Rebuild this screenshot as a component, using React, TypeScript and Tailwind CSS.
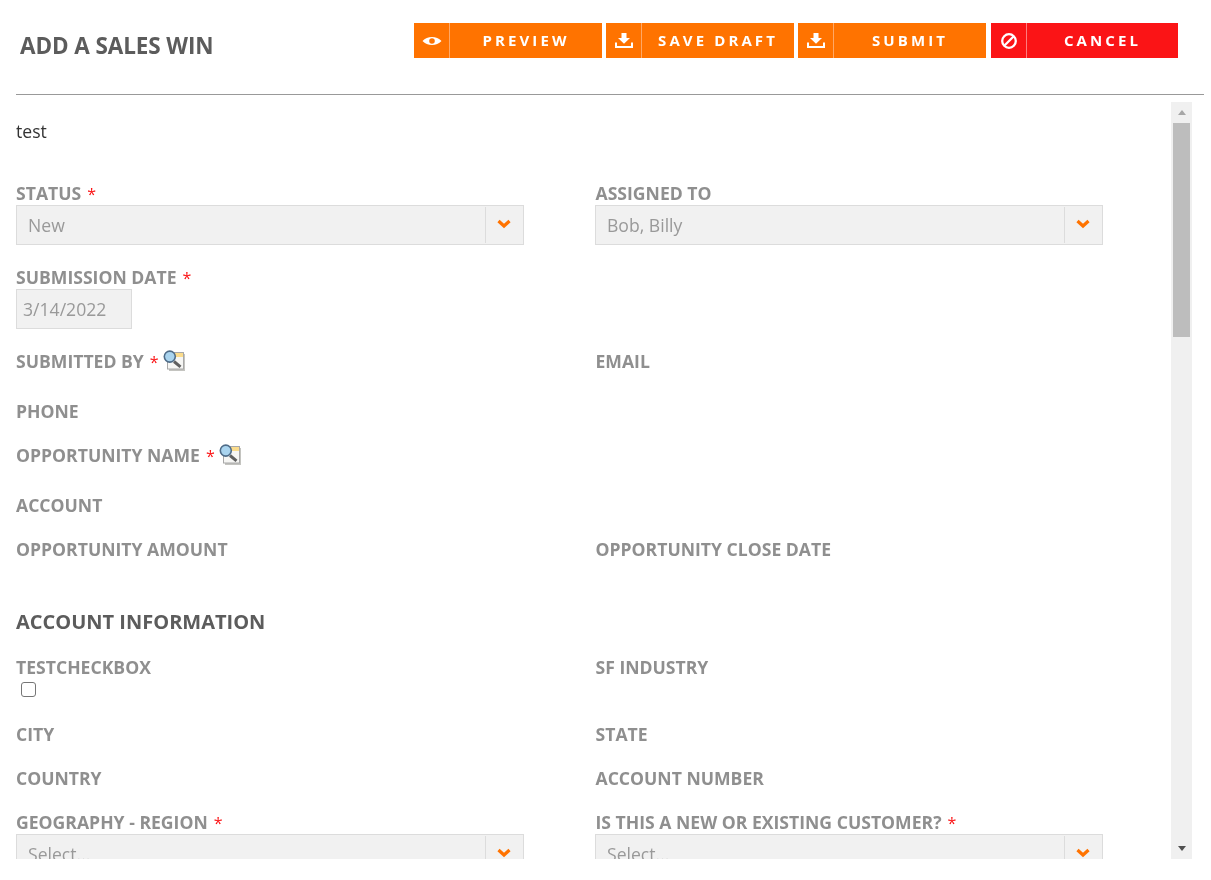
import React from "react";

const font = { fontFamily: '"Open Sans", sans-serif' };

function EyeIcon() {
  return (
    <svg width="20" height="20" viewBox="0 0 20 20">
      <path fillRule="evenodd" fill="#fff" d="M0.5 10C3 7.100 6.300 6 10 6s7 1.100 9.500 4C17 12.900 13.700 14 10 14s-7-1.100-9.500-4zM10 7.200a2.800 2.800 0 1 0 0 5.600 2.800 2.800 0 0 0 0-5.600z" />
    </svg>
  );
}

function DownloadIcon() {
  return (
    <svg width="18" height="15" viewBox="0 0 18 15" fill="#fff" className="-mt-[1px]">
      <path d="M6.500 0h5v5h3.500L9 10.800 3 5h3.500z" />
      <path d="M0 9.500h2v3.500h14V9.500h2V15H0z" />
    </svg>
  );
}

function BanIcon() {
  return (
    <svg width="20" height="20" viewBox="0 0 20 20" fill="none" stroke="#fff" strokeWidth="2.300">
      <circle cx="10" cy="10" r="6.800" />
      <path d="M5.500 14.500 14.500 5.500" />
    </svg>
  );
}

function ActionButton({ icon, label, red }: { icon: React.ReactNode; label: string; red?: boolean }) {
  return (
    <button
      className={
        red
          ? "flex h-[35px] w-[187px] items-center bg-[#fb1416] text-white"
          : "flex h-[35px] w-[188px] items-center bg-[#ff7300] text-white"
      }
    >
      <span className={red ? "flex h-full w-[36px] items-center justify-center border-r border-[#fd7c7e]" : "flex h-full w-[36px] items-center justify-center border-r border-[#ffa866]"}>
        {icon}
      </span>
      <span className="flex-1 text-center text-[15px] font-bold tracking-[3.1px]">{label}</span>
    </button>
  );
}

function Label({ text, required, lookup, right }: { text: string; required?: boolean; lookup?: boolean; right?: boolean }) {
  return (
    <div className={right ? "flex h-6 items-center pl-[0.5px] text-[17.6px] font-bold leading-6 text-[#8f8f8f]" : "flex h-6 items-center text-[17.6px] font-bold leading-6 text-[#8f8f8f]"}>
      <span>{text}</span>
      {required && <span className="ml-[6px] mt-[1px] text-[16px] font-normal text-[#fb1416]">*</span>}
      {lookup && (
        <span className="-mt-[2px] ml-[4px]">
          <LookupIcon />
        </span>
      )}
    </div>
  );
}

function LookupIcon() {
  return (
    <svg width="23" height="21" viewBox="0 0 23 21" className="block">
      <rect x="6" y="4" width="16" height="17" fill="#c4c4c0" />
      <rect x="4.500" y="2.500" width="16" height="16.500" fill="#f6f6f4" stroke="#a8a8a8" strokeWidth="1" />
      <rect x="11" y="3" width="9" height="4" fill="#fbdc8c" />
      <path d="M11 11.500 17.500 16.800" stroke="#5f5f5f" strokeWidth="3" />
      <circle cx="6.800" cy="6.600" r="5.500" fill="#a9d4ef" stroke="#4f6c88" strokeWidth="1.600" />
    </svg>
  );
}

function SelectBox({ value }: { value: string }) {
  return (
    <div className="flex h-10 w-[508px] items-stretch border border-[#dcdcdc] bg-[#f1f1f1]">
      <span className="flex flex-1 items-center px-[11px] text-[17.6px] text-[#999999]">{value}</span>
      <span className="my-[1px] flex w-[38px] justify-center border-l border-[#dcdcdc] pt-[9px] pr-[1px]">
        <svg width="16" height="16" viewBox="0 0 16 16" fill="none" stroke="#ff7300" strokeWidth="3.200">
          <path d="M2.500 5 8 10 13.500 5" />
        </svg>
      </span>
    </div>
  );
}

function Row({ children, className }: { children: React.ReactNode; className: string }) {
  return <div className={"grid grid-cols-[579px_1fr] " + className}>{children}</div>;
}

export default function App() {
  return (
    <div className="h-[880px] w-[1211px] overflow-hidden bg-white" style={font}>
      <header className="flex h-[94px] items-start pl-5 pt-[23px] will-change-transform">
        <h1 className="mt-[5px] w-[394px] text-[22.5px] leading-[36px] font-bold tracking-[-0.1px] text-[#5c5c5c]">ADD A SALES WIN</h1>
        <div className="flex gap-1">
          <ActionButton icon={<EyeIcon />} label="PREVIEW" />
          <ActionButton icon={<DownloadIcon />} label="SAVE DRAFT" />
          <ActionButton icon={<DownloadIcon />} label="SUBMIT" />
          <div className="ml-[1px]">
            <ActionButton icon={<BanIcon />} label="CANCEL" red />
          </div>
        </div>
      </header>
      <hr className="ml-4 w-[1188px] border-t border-[#999999]" />
      <div className="mt-[7px] ml-4 flex h-[757px] w-[1176px]">
        <main className="h-full flex-1 overflow-hidden will-change-transform">
          <p className="mt-[17px] mb-[38px] text-[17.6px] leading-6 text-[#333333]">test</p>
          <Row className="mb-5">
            <div>
              <Label text="STATUS" required />
              <SelectBox value="New" />
            </div>
            <div>
              <Label text="ASSIGNED TO" right />
              <SelectBox value="Bob, Billy" />
            </div>
          </Row>
          <div className="mb-5">
            <Label text="SUBMISSION DATE" required />
            <div className="flex h-10 w-[116px] items-center border border-[#dcdcdc] bg-[#f1f1f1] px-[6px] text-[17.6px] text-[#999999]">
              3/14/2022
            </div>
          </div>
          <Row className="mb-5 h-[30px]">
            <Label text="SUBMITTED BY" required lookup />
            <Label text="EMAIL" right />
          </Row>
          <div className="mb-5">
            <Label text="PHONE" />
          </div>
          <div className="mb-5 h-[30px]">
            <Label text="OPPORTUNITY NAME" required lookup />
          </div>
          <div className="mb-5">
            <Label text="ACCOUNT" />
          </div>
          <Row className="mb-[45px]">
            <Label text="OPPORTUNITY AMOUNT" />
            <Label text="OPPORTUNITY CLOSE DATE" right />
          </Row>
          <h2 className="mb-[19px] flex h-[30px] items-center pt-[1px] text-[20px] font-bold text-[#5c5c5c]">ACCOUNT INFORMATION</h2>
          <Row className="mb-5">
            <div>
              <Label text="TESTCHECKBOX" />
              <div className="h-[23px] pt-[3px] pl-[5px]">
                <input type="checkbox" className="block h-[15px] w-[15px] appearance-none rounded-[3px] border border-[#767676] bg-white" />
              </div>
            </div>
            <Label text="SF INDUSTRY" right />
          </Row>
          <Row className="mb-5">
            <Label text="CITY" />
            <Label text="STATE" right />
          </Row>
          <Row className="mb-5">
            <Label text="COUNTRY" />
            <Label text="ACCOUNT NUMBER" right />
          </Row>
          <Row className="mb-5">
            <div>
              <Label text="GEOGRAPHY - REGION" required />
              <SelectBox value="Select..." />
            </div>
            <div>
              <Label text="IS THIS A NEW OR EXISTING CUSTOMER?" required right />
              <SelectBox value="Select..." />
            </div>
          </Row>
        </main>
        <aside className="flex h-full w-[21px] shrink-0 flex-col items-center bg-[#f0f0f0]">
          <div className="flex h-[21px] items-center justify-center">
            <div className="h-0 w-0 border-x-[4.500px] border-b-[5px] border-x-transparent border-b-[#a6a6a6]" />
          </div>
          <div className="h-[214px] w-[17px] bg-[#bdbdbd]" />
          <div className="flex-1" />
          <div className="flex h-[21px] items-center justify-center">
            <div className="h-0 w-0 border-x-[4.500px] border-t-[5px] border-x-transparent border-t-[#505050]" />
          </div>
        </aside>
      </div>
    </div>
  );
}
